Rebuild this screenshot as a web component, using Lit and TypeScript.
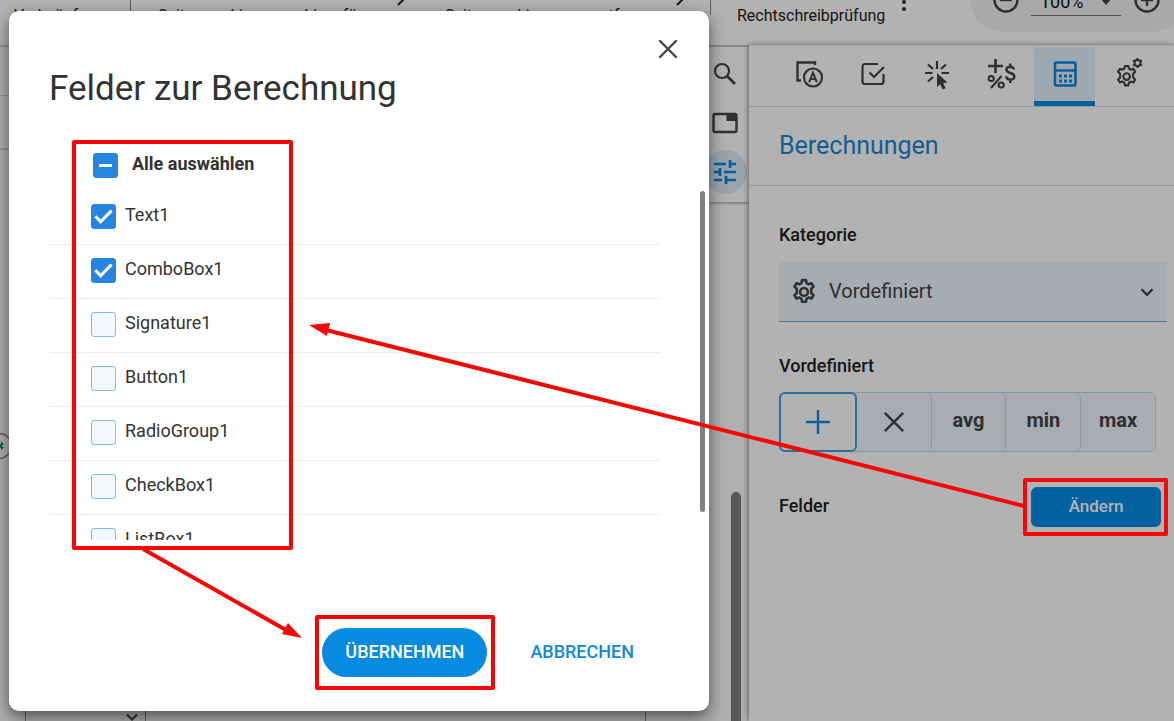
import { LitElement, html, css, svg } from "lit";
import { customElement, property, state } from "lit/decorators.js";

const gearPath =
  "M10.2 1h3.6l.6 2.8 1.900 1.100 2.700-.9 1.800 3.100-2.100 1.900v4l2.100 1.900-1.800 3.100-2.700-.9-1.900 1.100-.6 2.800h-3.600l-.6-2.800-1.900-1.100-2.700.9-1.800-3.100 2.100-1.900v-4l-2.100-1.900 1.800-3.100 2.700.9 1.900-1.100z";

const icons = {
  close: svg`<path d="M4 4 20 20M20 4 4 20" stroke-width="2.400" stroke-linecap="round"/>`,
  plus: svg`<path d="M12 -1V25M-1 12H25" stroke-width="2.600"/>`,
  times: svg`<path d="M2 2 22 22M22 2 2 22" stroke-width="2.600"/>`,
  chevron: svg`<path d="M6 9l6 6 6-6" stroke-width="2.600"/>`,
  search: svg`<circle cx="9" cy="9" r="7"/><path d="M14 14l8 8" stroke-width="2.800"/>`,
  page: svg`<rect x="0.500" y="3" width="23" height="18" rx="1.500" stroke-width="2.400"/><path d="M13.500 3h10v7h-10z" fill="currentColor" stroke="none"/>`,
  tune: svg`<path d="M1 4h12M17 4h6M17 0v8M1 12h6M7 8v8M11 12h12M1 20h8M13 20h10M13 16v8" stroke-width="2.600"/>`,
  gear: svg`<path d="${gearPath}" stroke-width="2.400" stroke-linejoin="round"/><circle cx="12" cy="11.900" r="3.600" stroke-width="2.400"/>`,
  text: svg`<path d="M4 18.500H0.500V0.500H18V3" stroke-width="2.400"/><circle cx="16" cy="15.500" r="9" stroke-width="2.200"/><path d="M12.200 20.200 16 10.600l3.800 9.600M13.500 17h5" stroke-width="2"/>`,
  check: svg`<path d="M17 2H4a2.500 2.500 0 0 0-2.500 2.500v15A2.500 2.500 0 0 0 4 22h16a2.500 2.500 0 0 0 2.500-2.500V12"/><path d="M8.500 10.500l4.500 4.500L23 5"/>`,
  click: svg`<path d="M12-1v8M0 11h7.500M16.500 11H24M3 2.500l5 4.500M21 2.500l-5 4.500M3 19.500l5-4.500"/><path d="M12 11v14l3.300-2.800 2.300 5.300 3-1.300-2.300-5.200 4.200-.5z" fill="currentColor" stroke="none"/>`,
  calc: svg`<rect x="2" y="0.500" width="20.500" height="23" rx="1.500" stroke-width="2.600"/><path d="M2 8.500h20" stroke-width="2.400"/><path d="M6 14h3M11 14h3M16 14h3M6 19h3M11 19h3M16 19h3" stroke-width="2.800"/>`,
};

type IconName = keyof typeof icons | "format" | "gears";

@customElement("ui-icon")
class UiIcon extends LitElement {
  @property() name: IconName = "close";

  static styles = css`
    :host {
      display: inline-flex;
      flex: none;
      width: 24px;
      height: 24px;
    }
    .glyph {
      width: 100%;
      height: 100%;
      overflow: visible;
      fill: none;
      stroke: currentColor;
      stroke-width: 2.2;
    }
  `;

  private shape() {
    if (this.name === "format") {
      return svg`<path d="M6.500-3v14M-1 4h15" stroke-width="2.600"/>
        <circle cx="2.200" cy="16.500" r="2.600" stroke-width="2"/><circle cx="12.200" cy="23" r="2.600" stroke-width="2"/><path d="M12.500 14 2 26" stroke-width="2"/>
        <path d="M25 7.500c-.6-2-1.800-2.700-3.700-2.700-2.200 0-3.900 1-3.900 3 0 4.200 7.900 2.200 7.900 6.600 0 2-1.700 3.200-4 3.200-2.200 0-3.900-1-4.200-3.200M21.300 1.500v3M21.300 17.500v3.500" stroke-width="2.400"/>`;
    }
    if (this.name === "gears") {
      return svg`<g transform="translate(-2 3) scale(.97)"><path d="${gearPath}" stroke-linejoin="round"/><circle cx="12" cy="11.900" r="3.400"/></g>
        <circle cx="20.500" cy="1" r="3" stroke-width="2"/>
        <path d="M20.500-4v2M20.500 4v2M16-1.500l2 1M23 2.500l2 1M16 3.500l2-1M23-.500l2-1" stroke-width="2"/>`;
    }
    return icons[this.name];
  }

  render() {
    return html`<svg class="glyph" viewBox="0 0 24 24" aria-hidden="true">${this.shape()}</svg>`;
  }
}

@customElement("top-toolbar")
class TopToolbar extends LitElement {
  static styles = css`
    :host {
      display: flex;
      align-items: flex-end;
      height: 45px;
      overflow: hidden;
      background: #fff;
      color: #222;
      font-size: 16px;
      line-height: 20px;
      white-space: nowrap;
    }
    button {
      display: flex;
      flex: none;
      align-items: flex-end;
      gap: 4px;
      padding: 0 0 19px;
      border: 0;
      background: none;
      color: inherit;
      font: inherit;
    }
    .group {
      display: flex;
      flex: none;
      align-items: flex-end;
      box-sizing: border-box;
      height: 60px;
      margin-bottom: 30px;
      border-right: 1px solid #888;
    }
    .group button {
      margin-bottom: -11px;
      padding-bottom: 0;
    }
    .links {
      width: 131px;
      padding-left: 14px;
    }
    .marks {
      width: 580px;
      padding-left: 27px;
    }
    .mark {
      width: 287px;
    }
    .corner {
      width: 12px;
      height: 12px;
      margin: 0 40px 20px auto;
      fill: none;
      stroke: #222;
      stroke-width: 2;
    }
    .mark:last-child .corner {
      margin-right: 48px;
    }
    .spell {
      padding-left: 26px;
      gap: 17px;
    }
    .dots {
      width: 4px;
      height: 30px;
      margin-bottom: 14px;
      fill: #333;
    }
    .zoom {
      display: flex;
      align-items: center;
      box-sizing: border-box;
      height: 64px;
      margin: 0 -10px 13px auto;
      padding: 0 24px 0 22px;
      border-radius: 32px;
      background: #f3f3f3;
    }
    .zoom button {
      padding: 0;
    }
    .ring {
      width: 26px;
      height: 26px;
      fill: none;
      stroke: #444;
      stroke-width: 2.4;
    }
    .field {
      display: flex;
      align-items: center;
      width: 90px;
      margin: 3px 13px 0 12px;
      border-bottom: 1px solid #777;
    }
    .field input {
      width: 68px;
      padding: 5px 0 3px 9px;
      box-sizing: border-box;
      border: 0;
      background: none;
      color: #111;
      font: inherit;
      font-size: 18px;
    }
    .arrow {
      width: 12px;
      height: 8px;
      margin-left: 1px;
      fill: #444;
    }
  `;

  render() {
    return html`
      <div class="group links"><button>Verknüpfung</button></div>
      <div class="group marks">
        ${["Seitenmarkierungen hinzufügen", "Seitenmarkierungen entfernen"].map(
          (label) => html`<button class="mark">
            ${label}<svg class="corner" viewBox="0 0 12 12"><path d="M5 0l6 0M11 5L5 11"/></svg>
          </button>`
        )}
      </div>
      <button class="spell">
        Rechtschreibprüfung
        <svg class="dots" viewBox="0 0 4 30">
          <circle cx="2" cy="12" r="2" /><circle cx="2" cy="20" r="2" /><circle cx="2" cy="27" r="2" />
        </svg>
      </button>
      <div class="zoom">
        <button aria-label="Verkleinern">
          <svg class="ring" viewBox="0 0 26 26"><circle cx="13" cy="13" r="11.500"/><path d="M7 13h12"/></svg>
        </button>
        <div class="field">
          <input aria-label="Zoom" .value=${"100%"} />
          <svg class="arrow" viewBox="0 0 12 8"><path d="M0 1h12L6 8z" /></svg>
        </div>
        <button aria-label="Vergrößern">
          <svg class="ring" viewBox="0 0 26 26"><circle cx="13" cy="13" r="11.500"/><path d="M7 13h12M13 7v12"/></svg>
        </button>
      </div>
    `;
  }
}

@customElement("page-canvas")
class PageCanvas extends LitElement {
  static styles = css`
    :host {
      display: flex;
      flex-direction: column;
      box-sizing: border-box;
      min-width: 0;
      padding-right: 8px;
      background: #fbfbfb;
    }
    .strip {
      flex: none;
      height: 48px;
      border-bottom: 1px solid #d0d0d0;
    }
    .ruler {
      flex: none;
      height: 52px;
      border-bottom: 2px solid #d6d6d6;
    }
    .sheet {
      display: grid;
      flex: 1;
      grid-template-columns: 1fr 10px;
      grid-template-rows: 1fr auto;
    }
    .handle {
      width: 28px;
      height: 28px;
      margin: 282px 0 0 -15px;
      overflow: visible;
      fill: #fbfbfb;
      stroke: #888;
      stroke-width: 1.5;
    }
    .leaf {
      fill: #008a70;
      stroke: none;
    }
    .track {
      height: 229px;
      align-self: end;
      grid-row: 1 / 3;
      grid-column: 2;
      border-radius: 5px 5px 0 0;
      background: #808080;
    }
    .foot {
      display: flex;
      height: 12px;
      margin: 0 85px 0 25px;
      border-left: 1px solid #888;
      border-right: 1px solid #888;
    }
    .drop {
      display: flex;
      justify-content: flex-end;
      box-sizing: border-box;
      width: 120px;
      padding-right: 3px;
      border-right: 1px solid #888;
      color: #444;
    }
    .drop ui-icon {
      width: 20px;
      height: 20px;
      margin-top: -2px;
    }
  `;

  render() {
    return html`
      <div class="strip"></div>
      <div class="ruler"></div>
      <div class="sheet">
        <svg class="handle" viewBox="0 0 28 28">
          <circle cx="14" cy="14" r="12.500" />
          <path class="leaf" d="M14 12h2V9l3 3.500-3 1.500 3 1-3 3.500V16h-2z" />
        </svg>
        <div class="track"></div>
        <div class="foot">
          <div class="drop"><ui-icon name="chevron"></ui-icon></div>
        </div>
      </div>
    `;
  }
}

@customElement("side-rail")
class SideRail extends LitElement {
  static styles = css`
    :host {
      display: block;
    }
    .tools {
      display: flex;
      flex-direction: column;
      align-items: center;
      gap: 5px;
      padding: 5px 0 8px;
      background: #fff;
      box-shadow: 0 1px 3px rgb(0 0 0 / 0.4);
    }
    button {
      display: grid;
      place-items: center;
      width: 44px;
      height: 44px;
      margin-right: 8px;
      padding: 0;
      border: 0;
      border-radius: 50%;
      background: none;
      color: #444;
    }
    .active {
      background: #dcebf7;
      color: #0b85db;
    }
  `;

  render() {
    return html`<div class="tools">
      <button aria-label="Suchen"><ui-icon name="search"></ui-icon></button>
      <button aria-label="Seiten"><ui-icon name="page"></ui-icon></button>
      <button class="active" aria-label="Eigenschaften"><ui-icon name="tune"></ui-icon></button>
    </div>`;
  }
}

@customElement("field-panel")
class FieldPanel extends LitElement {
  @state() private operator = "plus";

  static styles = css`
    :host {
      display: block;
      background: #fff;
      box-shadow: -1px 0 5px rgb(0 0 0 / 0.45);
      color: #222;
    }
    button {
      font-family: inherit;
    }
    .tabs {
      display: flex;
      gap: 3px;
      padding: 1px 0 0 29px;
      border-bottom: 1px solid #dcdcdc;
    }
    .tab {
      display: grid;
      place-items: center;
      box-sizing: border-box;
      width: 61px;
      height: 59px;
      padding: 0;
      border: 0;
      border-bottom: 5px solid transparent;
      background: none;
      color: #444;
    }
    .tab.active {
      border-color: #078be0;
      border-radius: 4px 4px 0 0;
      background: #e3f1fc;
      color: #0b85db;
    }
    .title {
      margin: 0;
      padding: 20px 30px 21px;
      border-bottom: 1px solid #dcdcdc;
      color: #1b86da;
      font-size: 25px;
      font-weight: 400;
      line-height: 37px;
    }
    .form {
      padding: 37px 7px 0 30px;
    }
    .label {
      display: block;
      font-size: 18px;
      font-weight: 500;
      line-height: 24px;
    }
    .category {
      display: grid;
      grid-template-columns: 50px 1fr 40px;
      align-items: center;
      height: 59px;
      margin: 15px 0 32px;
      border-bottom: 1px solid #66ade2;
      background: #f0f6fc;
      color: #444;
    }
    .category select {
      grid-area: 1 / 1 / 2 / 4;
      height: 100%;
      padding: 0 40px 2px 50px;
      border: 0;
      appearance: none;
      background: none;
      color: #444;
      font: inherit;
      font-size: 20px;
    }
    .category ui-icon {
      grid-row: 1;
      grid-column: 1;
      justify-self: center;
      width: 26px;
      height: 26px;
      pointer-events: none;
    }
    .category .arrow {
      grid-column: 3;
      width: 22px;
      height: 22px;
    }
    .operators {
      display: flex;
      box-sizing: border-box;
      width: 377px;
      height: 60px;
      margin: 14px 0 35px;
      border: 1px solid #bcdcf0;
      border-radius: 6px;
      background: #f2f7fc;
    }
    .operator {
      display: grid;
      flex: 1;
      place-items: center;
      padding: 0 0 4px;
      border: 0;
      border-right: 1px solid #bcdcf0;
      border-radius: 5px;
      background: none;
      color: #444;
      font-size: 20px;
      font-weight: 700;
    }
    .operator:last-child {
      border-right: 0;
    }
    .operator ui-icon {
      width: 22px;
      height: 22px;
      margin-top: 4px;
    }
    .operator.active {
      margin: -1px 0 -1px -1px;
      border: 2px solid #3f9fe0;
      border-radius: 6px;
      background: #fff;
      color: #078be0;
    }
    .fields {
      display: flex;
      align-items: center;
      justify-content: space-between;
      padding-right: 6px;
    }
    .fields .label {
      padding-bottom: 2px;
    }
    .change {
      width: 130px;
      height: 40px;
      padding: 0 0 2px;
      border: 0;
      border-radius: 6px;
      background: #078ce4;
      color: #fff;
      font-size: 17px;
      font-weight: 500;
    }
  `;

  render() {
    const tabs: [IconName, string][] = [
      ["text", "Text"],
      ["check", "Validierung"],
      ["click", "Aktionen"],
      ["format", "Format"],
      ["calc", "Berechnungen"],
      ["gears", "Optionen"],
    ];
    return html`
      <nav class="tabs">
        ${tabs.map(
          ([icon, name]) => html`<button class="tab ${icon === "calc" ? "active" : ""}" aria-label=${name}>
            <ui-icon name=${icon}></ui-icon>
          </button>`
        )}
      </nav>
      <h2 class="title">Berechnungen</h2>
      <div class="form">
        <label class="label" for="category">Kategorie</label>
        <div class="category">
          <select id="category"><option>Vordefiniert</option></select>
          <ui-icon name="gear"></ui-icon>
          <ui-icon class="arrow" name="chevron"></ui-icon>
        </div>
        <span class="label" id="operators">Vordefiniert</span>
        <div class="operators" role="group" aria-labelledby="operators">
          ${["plus", "times", "avg", "min", "max"].map(
            (op) => html`<button
              class="operator ${op === this.operator ? "active" : ""}"
              aria-label=${op}
              @click=${() => (this.operator = op)}
            >
              ${op === "plus" || op === "times" ? html`<ui-icon name=${op}></ui-icon>` : op}
            </button>`
          )}
        </div>
        <div class="fields">
          <span class="label">Felder</span>
          <button class="change">Ändern</button>
        </div>
      </div>
    `;
  }
}

@customElement("field-dialog")
class FieldDialog extends LitElement {
  @state() private fields = [
    { name: "Text1", on: true },
    { name: "ComboBox1", on: true },
    { name: "Signature1", on: false },
    { name: "Button1", on: false },
    { name: "RadioGroup1", on: false },
    { name: "CheckBox1", on: false },
    { name: "ListBox1", on: false },
  ];

  static styles = css`
    :host {
      display: flex;
      flex-direction: column;
      box-sizing: border-box;
      padding-top: 26px;
      border-radius: 10px;
      background: #fff;
      box-shadow: 0 6px 16px rgb(0 0 0 / 0.55);
      color: #333;
    }
    button {
      border: 0;
      background: none;
      font: inherit;
      font-size: 18px;
      font-weight: 500;
    }
    .close {
      align-self: flex-end;
      display: flex;
      margin-right: 29px;
      padding: 0;
      color: #444;
    }
    .title {
      margin: 4px 40px 27px;
      font-size: 35px;
      font-weight: 400;
      line-height: 48px;
    }
    .row {
      display: flex;
      align-items: center;
      gap: 9px;
      box-sizing: border-box;
      height: 54px;
      padding: 0 0 2px 41px;
      border-bottom: 1px solid #eee;
      font-size: 18px;
      line-height: 24px;
    }
    .row span {
      padding-bottom: 4px;
    }
    .all {
      gap: 14px;
      height: 51px;
      padding: 0 0 0 84px;
      border: 0;
      font-weight: 700;
    }
    input {
      display: grid;
      place-items: center;
      flex: none;
      width: 25px;
      height: 25px;
      margin: 0;
      border: 1px solid #80bce8;
      border-radius: 3px;
      appearance: none;
      background: #f3f8fe;
    }
    input:checked,
    input:indeterminate {
      border-color: #2486de;
      background: #2486de;
    }
    input:checked::after {
      box-sizing: border-box;
      width: 17px;
      height: 9px;
      margin-bottom: 5px;
      border: solid #fff;
      border-width: 0 0 3px 3px;
      content: "";
      transform: rotate(-45deg);
    }
    input:indeterminate::after {
      width: 13px;
      height: 3px;
      background: #fff;
      content: "";
    }
    .scroller {
      display: flex;
      flex: 1;
      gap: 39px;
      min-height: 0;
      padding: 0 4px 0 41px;
      overflow: hidden;
    }
    .list {
      flex: 1;
      overflow: hidden;
    }
    .thumb {
      width: 5px;
      height: 92%;
      border-radius: 3px;
      background: #808080;
    }
    .actions {
      display: flex;
      justify-content: flex-end;
      align-items: center;
      gap: 43px;
      padding: 88px 75px 34px 0;
    }
    .apply {
      width: 165px;
      height: 49px;
      padding: 0 0 2px;
      border-radius: 25px;
      background: #068be0;
      color: #fff;
    }
    .cancel {
      padding: 0 0 2px;
      color: #128adb;
    }
  `;

  private toggle(index: number) {
    this.fields = this.fields.map((f, i) => (i === index ? { ...f, on: !f.on } : f));
  }

  render() {
    const count = this.fields.filter((f) => f.on).length;
    return html`
      <button class="close" aria-label="Schließen"><ui-icon name="close"></ui-icon></button>
      <h1 class="title">Felder zur Berechnung</h1>
      <label class="row all">
        <input
          type="checkbox"
          .indeterminate=${count > 0 && count < this.fields.length}
          .checked=${count === this.fields.length}
        />
        <span>Alle auswählen</span>
      </label>
      <div class="scroller">
        <div class="list">
          ${this.fields.map(
            (f, i) => html`<label class="row">
              <input type="checkbox" .checked=${f.on} @change=${() => this.toggle(i)} />
              <span>${f.name}</span>
            </label>`
          )}
        </div>
        <div class="thumb"></div>
      </div>
      <div class="actions">
        <button class="apply">ÜBERNEHMEN</button>
        <button class="cancel">ABBRECHEN</button>
      </div>
    `;
  }
}

@customElement("app-root")
class AppRoot extends LitElement {
  static styles = css`
    :host {
      display: flex;
      flex-direction: column;
      position: relative;
      height: 100vh;
      overflow: hidden;
      font-family: Roboto, "Liberation Sans", sans-serif;
      background: #fff;
    }
    .work {
      display: grid;
      grid-template-columns: 1fr auto 425px;
      flex: 1;
      min-height: 0;
    }
    page-canvas {
      border-top: 2px solid #cfcfcf;
    }
    side-rail {
      width: 40px;
      margin-left: -40px;
      border-top: 2px solid #cfcfcf;
    }
    field-panel {
      border-top: 1px solid #eee;
    }
    .backdrop {
      display: flex;
      position: absolute;
      inset: 0;
      padding: 11px 9px 10px;
      background: rgb(0 0 0 / 0.3);
    }
    field-dialog {
      flex: 0 1 700px;
    }
    .notes {
      position: absolute;
      top: 0;
      left: 0;
      width: 1174px;
      height: 721px;
      pointer-events: none;
      fill: none;
      stroke: #f80606;
      stroke-width: 4;
      stroke-linejoin: round;
    }
    .tip {
      fill: #f80606;
      stroke: none;
    }
  `;

  render() {
    return html`
      <top-toolbar></top-toolbar>
      <div class="work">
        <page-canvas></page-canvas>
        <side-rail></side-rail>
        <field-panel></field-panel>
      </div>
      <div class="backdrop"><field-dialog role="dialog" aria-label="Felder zur Berechnung"></field-dialog></div>
      <svg class="notes" viewBox="0 0 1174 721" aria-hidden="true">
        <rect x="74" y="142" width="217" height="406" />
        <rect x="317" y="617" width="176" height="71" />
        <rect x="1025" y="480" width="141" height="54" />
        <path d="M1024 506 326 330M143 549 286 630" />
        <path class="tip" d="M309 325l21-2-3 13z" />
        <path class="tip" d="M302 638l-20-4 6-11z" />
      </svg>
    `;
  }
}
